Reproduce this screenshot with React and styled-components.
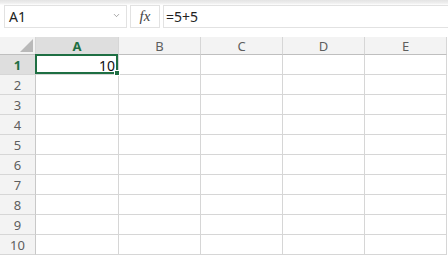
import styled, { createGlobalStyle } from "styled-components";
import { ChevronDown } from "lucide-react";

const GlobalStyle = createGlobalStyle`
    body {
        margin: 0;
        background: #fff;
        font-family: "Noto Sans", "Open Sans", sans-serif;
    }
`;

const columns = ["A", "B", "C", "D", "E"];
const rows = [1, 2, 3, 4, 5, 6, 7, 8, 9, 10];
const values = { A1: "10" };

export default function App() {
    return (
        <>
            <GlobalStyle />
            <Sheet>
                <FormulaBar>
                    <NameBox>
                        <span>A1</span>
                        <ChevronDown size={9} strokeWidth={1.5} color="#666" />
                    </NameBox>
                    <FxBox>fx</FxBox>
                    <FormulaInput>=5+5</FormulaInput>
                </FormulaBar>
                <Grid>
                    <Corner />
                    {columns.map((col) => (
                        <ColHeader key={col} $active={col === "A"}>
                            {col}
                        </ColHeader>
                    ))}
                    {rows.map((row) => (
                        <Row key={row} row={row} />
                    ))}
                </Grid>
            </Sheet>
        </>
    );
}

function Row({ row }) {
    return (
        <>
            <RowHeader $active={row === 1}>{row}</RowHeader>
            {columns.map((col) => {
                const id = col + row;
                return (
                    <Cell key={id} $selected={id === "A1"}>
                        {values[id]}
                        {id === "A1" && <Handle />}
                    </Cell>
                );
            })}
        </>
    );
}

const colors = {
    green: "#1e6f43",
    grid: "#d6d6d6",
    header: "#f3f3f3",
    headerActive: "#dedede",
    headerText: "#5e5e5e",
};

const Sheet = styled.div`
    width: 448px;
    height: 257px;
    overflow: hidden;
`;

const FormulaBar = styled.div`
    display: flex;
    gap: 3px;
    height: 23px;
    padding: 5px 0 0 4px;
    margin-bottom: 9px;
    background: linear-gradient(#e4e4e4 0, #eeeeee 3px, #fff 5px);
`;

const Box = styled.div`
    box-sizing: border-box;
    height: 23px;
    background: #fff;
    border: 1px solid #e2e2e2;
    display: flex;
    align-items: center;
    color: #222;
    font-size: 14px;
`;

const NameBox = styled(Box)`
    width: 123px;
    padding: 0 5px 0 4px;
    justify-content: space-between;

    svg {
        margin-top: -3px;
    }
`;

const FxBox = styled(Box)`
    width: 30px;
    justify-content: center;
    font-family: "Liberation Serif", "DejaVu Serif", serif;
    font-style: italic;
    font-size: 15px;
    color: #444;
`;

const FormulaInput = styled(Box)`
    flex: 1;
    padding-left: 2px;
    border-right: none;
`;

const Grid = styled.div`
    display: grid;
    grid-template-columns: 36px 83px 82px 82px 82px 82px;
    grid-template-rows: 18px repeat(10, 20px);
`;

const Corner = styled.div`
    position: relative;
    box-sizing: border-box;
    background: ${colors.header};
    border-right: 1px solid ${colors.grid};
    border-bottom: 1px solid #bfbfbf;

    &::after {
        content: "";
        position: absolute;
        right: 2px;
        bottom: 2px;
        border-style: solid;
        border-width: 0 0 13px 13px;
        border-color: transparent transparent #b9b9b9 transparent;
    }
`;

const HeaderCell = styled.div`
    box-sizing: border-box;
    display: flex;
    align-items: center;
    justify-content: center;
    font-size: 13px;
    color: ${(p) => (p.$active ? colors.green : colors.headerText)};
    font-weight: ${(p) => (p.$active ? 700 : 400)};
    background: ${(p) => (p.$active ? colors.headerActive : colors.header)};
`;

const ColHeader = styled(HeaderCell)`
    border-right: 1px solid ${colors.grid};
    border-bottom: 1px solid #bfbfbf;
    padding-top: 1px;
`;

const RowHeader = styled(HeaderCell)`
    border-right: 1px solid #c8c8c8;
    border-bottom: 1px solid ${colors.grid};
    padding-top: 1px;
`;

const Cell = styled.div`
    position: relative;
    box-sizing: border-box;
    border-right: 1px solid ${colors.grid};
    border-bottom: 1px solid ${colors.grid};
    display: flex;
    align-items: center;
    justify-content: flex-end;
    padding: 1px 3px 0 0;
    font-size: 14px;
    color: #111;

    ${(p) =>
        p.$selected &&
        `
        &::before {
            content: "";
            position: absolute;
            top: -1px;
            left: -1px;
            right: 0;
            bottom: 0;
            border: 2px solid ${colors.green};
        }
    `}
`;

const Handle = styled.span`
    position: absolute;
    right: -2px;
    bottom: -2px;
    width: 4px;
    height: 4px;
    background: ${colors.green};
    border: 1px solid #fff;
    z-index: 1;
`;
